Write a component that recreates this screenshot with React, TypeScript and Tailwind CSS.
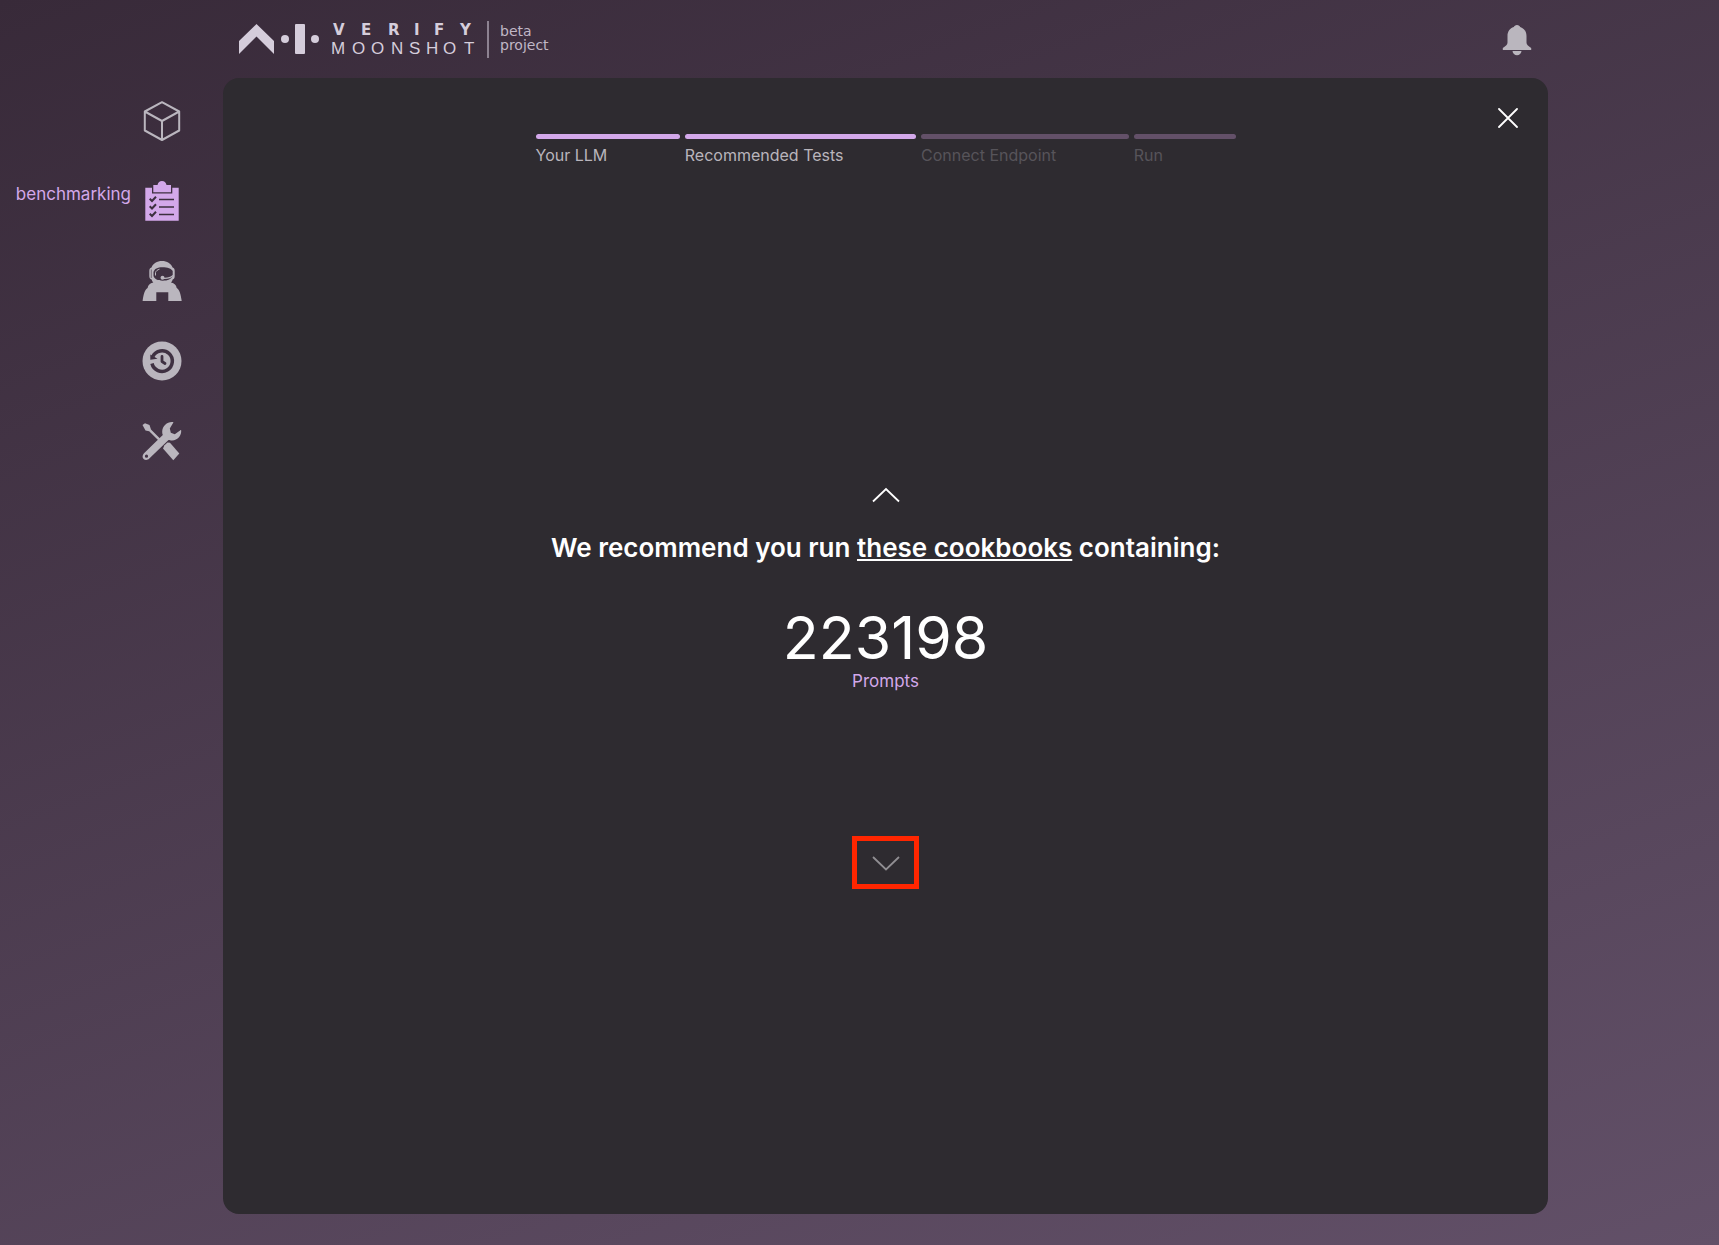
import React from 'react';

function Logo() {
  return (
    <svg width="320" height="40" viewBox="0 0 320 40" role="img" aria-label="AI Verify Moonshot beta project" fill="#d5cddb">
      <path d="M0 21 17.5 4 35 21V34L17.5 16.5 0 34Z" />
      <circle cx="46" cy="19" r="4" />
      <rect x="56" y="4" width="10" height="30" rx="1" />
      <circle cx="76" cy="19" r="4" />
      <text x="94 122 149 175 195 221" y="15" fontFamily="DejaVu Sans" fontWeight="700" fontSize="15">VERIFY</text>
      <text x="92 113 132 152 170 187 204 225" y="34" fontFamily="Liberation Sans" fontSize="17">MOONSHOT</text>
      <rect x="248" y="1" width="2" height="37" fill="#8d8291" />
      <g fontFamily="DejaVu Sans" fontSize="14" fill="#c0b7c6">
        <text x="261" y="16">beta</text>
        <text x="261" y="30">project</text>
      </g>
    </svg>
  );
}

function BellIcon() {
  return (
    <svg width="30" height="31" viewBox="0 0 30 31" fill="#bab6be">
      <path d="M15 0c1.700 0 2.700 1 3.200 2 4 1.300 6.300 4.500 6.300 9v6.500c0 2 1.500 3.600 4.700 5.500v2H.8v-2c3.200-1.900 4.700-3.500 4.700-5.500V11c0-4.500 2.300-7.700 6.300-9 .5-1 1.500-2 3.200-2Z" />
      <path d="M10.500 26h9c-.3 2.500-2 4.200-4.500 4.200s-4.200-1.700-4.500-4.200Z" />
    </svg>
  );
}

function CubeIcon() {
  return (
    <svg width="40" height="40" viewBox="0 0 40 40" fill="none" stroke="#bab6be" strokeWidth="2" strokeLinejoin="round">
      <path d="M20 1.200 37.200 10.500V29.500L20 39 2.800 29.500V10.500ZM2.800 10.500 20 20 37.200 10.500M20 20V39" />
    </svg>
  );
}

function ClipboardIcon() {
  return (
    <svg width="40" height="40" viewBox="0 0 40 40">
      <path fill="#d3a8ea" d="M3.300 6.700H10V12.500H30.300V6.700H36.700V39.700H3.300Z" />
      <path fill="#d3a8ea" d="M11.300 4H15.500C16 1.500 17.700 0 20 0s4 1.500 4.500 4H29V11.300H11.300Z" />
      <path fill="none" stroke="#3c2f3f" strokeWidth="1.700" d="M17 18.500H32M17 26H32M17 33.500H32" />
      <path fill="none" stroke="#3c2f3f" strokeWidth="2" d="m7.700 17.800 2.300 2.200 4-4.200M7.700 25.300 10 27.500l4-4.200M7.700 32.800 10 35l4-4.200" />
    </svg>
  );
}

function AstronautIcon() {
  return (
    <svg width="40" height="40" viewBox="0 0 40 40">
      <path fill="#bab6be" d="M20 0c5 0 9 2.500 10.600 6.500 1.600.5 2.100 1.500 2.100 3.500v5c0 2-.5 3-2 3.500-.4 1.200-.9 2.200-1.700 3 3.500.8 5.300 2.500 5.700 5.500 2.800 1.500 4 6 5 13H26.300V31.300H14.300V40H.6c1-7 2.200-11.500 5-13 .4-3 2.200-4.700 5.700-5.500-.8-.8-1.300-1.800-1.700-3-1.700-.5-2.300-1.500-2.300-3.500v-5c0-2 .6-3 2.200-3.500C11 2.500 15 0 20 0Z" />
      <path fill="#3f3142" d="M20.500 6.200c5 0 9 1.300 10.200 3.800v5c-1.200 3-5 4.700-10 4.700s-8.300-1.700-9.200-4.700v-4c.9-3.300 4-4.800 9-4.800Z" />
      <path fill="none" stroke="#bab6be" strokeWidth="1" d="M13.500 14.500v-3c.5-1.500 2-2.800 4-3.300" />
      <path fill="none" stroke="#bab6be" strokeWidth="1.300" d="M31 14.500c-2 2-5.500 3-9.500 2.800" />
      <circle cx="20.500" cy="16.800" r="2" fill="#bab6be" />
      <path fill="none" stroke="#3f3142" strokeWidth=".6" d="M9.300 8.500V17" />
    </svg>
  );
}

function HistoryIcon() {
  return (
    <svg width="40" height="40" viewBox="0 0 40 40">
      <circle cx="20" cy="20" r="19.500" fill="#bab6be" />
      <path fill="none" stroke="#3f3142" strokeWidth="3.500" d="M10.800 15.500A10.300 10.300 0 1 1 10 22.500" />
      <path fill="#3f3142" d="m8.300 13.500 7.200 4.200-7.200 1Z" />
      <path fill="none" stroke="#3f3142" strokeWidth="2.800" strokeLinecap="round" strokeLinejoin="round" d="M20 15.500V20.500L23 22.500" />
    </svg>
  );
}

function ToolsIcon() {
  return (
    <svg width="40" height="40" viewBox="0 0 40 40" fill="#bab6be">
      <path d="M.5 4 3 2.200 7.500 4 9 8.500 21.500 21 19.800 22.800 7.200 10.200 3.500 9.500Z" />
      <path d="m21 27.500 1.500-3.300 3-2.700 2.500.3 9.300 10.700-6 6.700Z" />
      <path fillRule="evenodd" d="M31.500 1.200 27.800 7.500l1 4.200 4 1.500 6.300-4.400c.9 5.700-3.500 10.500-9 10.700-1.600 0-2.600-.2-3.600-.5L7.300 37.600c-1.800 1.900-4.300 1.800-5.700.4-1.500-1.600-1.300-4 .4-5.700L20.800 14c-.5-1.300-.7-2.500-.6-3.800C20.700 4.700 25.700.2 31.500 1.200ZM4.500 33.600a1.600 1.600 0 1 0 0 3.200 1.600 1.600 0 0 0 0-3.200Z" />
    </svg>
  );
}

const navItems = [
  { name: 'home', icon: <CubeIcon /> },
  { name: 'benchmarking', icon: <ClipboardIcon />, active: true },
  { name: 'red teaming', icon: <AstronautIcon /> },
  { name: 'history', icon: <HistoryIcon /> },
  { name: 'utilities', icon: <ToolsIcon /> },
];

const steps = [
  { label: 'Your LLM', done: true },
  { label: 'Recommended Tests', done: true },
  { label: 'Connect Endpoint', done: false },
  { label: 'Run', done: false },
];

export default function App() {
  return (
    <div className="flex min-h-screen flex-col bg-[linear-gradient(160deg,#382a39_0%,#625068_100%)] font-['Inter',sans-serif] text-white">
      <header className="flex h-[78px] items-start justify-between pt-5 pr-[187px] pl-[239px]">
        <Logo />
        <button aria-label="Notifications" className="pt-[5px]">
          <BellIcon />
        </button>
      </header>

      <div className="flex flex-1 pr-[171px] pb-[31px]">
        <nav className="w-[223px] shrink-0 pt-[23px] pr-[41px]">
          <ul className="flex flex-col gap-10">
            {navItems.map((item) => (
              <li key={item.name}>
                <a href="#" aria-label={item.name} className="flex justify-end gap-[11px]">
                  {item.active && <span className="text-[17px] leading-[26px] text-[#d3a8ea]">{item.name}</span>}
                  {item.icon}
                </a>
              </li>
            ))}
          </ul>
        </nav>

        <main className="relative flex flex-1 flex-col items-center rounded-2xl bg-[#2e2b30] pt-14">
          <button aria-label="Close" className="absolute top-[30px] right-[30px]">
            <svg width="20" height="20" viewBox="0 0 20 20" fill="none" stroke="#fff" strokeWidth="1.800" strokeLinecap="round">
              <path d="M1 1 19 19M19 1 1 19" />
            </svg>
          </button>

          <ol className="flex w-full max-w-[700px] gap-[5px]">
            {steps.map((step) => (
              <li key={step.label} className="flex-auto">
                <div className={step.done ? 'h-[5px] rounded-full bg-[#d3a8ea]' : 'h-[5px] rounded-full bg-[#635068]'} />
                <span className={step.done ? 'block pt-1 text-base text-[#b9b5bc]' : 'block pt-1 text-base text-[#57545a]'}>
                  {step.label}
                </span>
              </li>
            ))}
          </ol>

          <section className="flex flex-col items-center pt-80">
            <button aria-label="Previous">
              <svg width="28" height="16" viewBox="0 0 28 16" fill="none" stroke="#fff" strokeWidth="1.800">
                <path d="M1 14.500 14 2 27 14.500" />
              </svg>
            </button>
            <h1 className="mt-7 text-[26px] leading-[34px] font-semibold">
              We recommend you run <a href="#" className="underline">these cookbooks</a> containing:
            </h1>
            <p className="mt-10 text-[59px] leading-[66px]">223198</p>
            <p className="text-[17px] leading-5 text-[#d3a8ea]">Prompts</p>
            <button
              aria-label="Next"
              className="mt-[145px] flex h-[53px] w-[67px] items-center justify-center border-5 border-[#ff2600]"
            >
              <svg width="28" height="16" viewBox="0 0 28 16" fill="none" stroke="#908e92" strokeWidth="1.800">
                <path d="M1 2 14 14.500 27 2" />
              </svg>
            </button>
          </section>
        </main>
      </div>
    </div>
  );
}
